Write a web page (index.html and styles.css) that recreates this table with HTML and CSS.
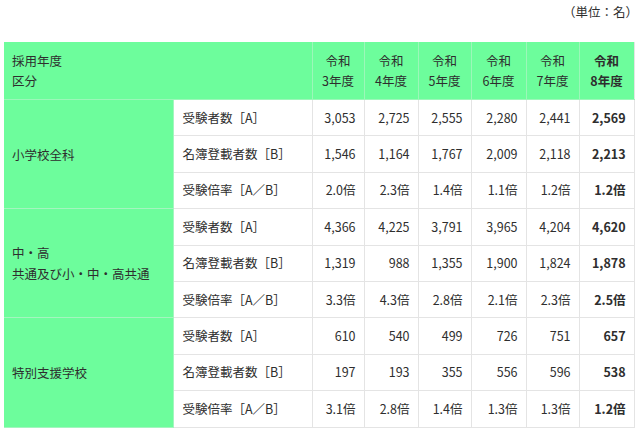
FILE: index.html
```html
<!DOCTYPE html>
<html lang="ja">
<head>
<meta charset="utf-8">
<link rel="stylesheet" href="styles.css">
</head>
<body>
<div class="page">
  <div class="unit">（単位：名）</div>
  <table class="tbl">
    <colgroup>
      <col class="c-cat"><col class="c-item">
      <col class="c-y1"><col class="c-y2"><col class="c-y3"><col class="c-y4"><col class="c-y5"><col class="c-y6">
    </colgroup>
    <thead>
      <tr class="head">
        <th colspan="2" class="hcat">採用年度<br>区分</th>
        <th>令和<br>3年度</th>
        <th>令和<br>4年度</th>
        <th>令和<br>5年度</th>
        <th>令和<br>6年度</th>
        <th>令和<br>7年度</th>
        <th class="bold">令和<br>8年度</th>
      </tr>
    </thead>
    <tbody>
      <tr>
        <th rowspan="3" class="cat">小学校全科</th>
        <td class="item">受験者数［A］</td>
        <td>3,053</td><td>2,725</td><td>2,555</td><td>2,280</td><td>2,441</td><td class="bold">2,569</td>
      </tr>
      <tr>
        <td class="item">名簿登載者数［B］</td>
        <td>1,546</td><td>1,164</td><td>1,767</td><td>2,009</td><td>2,118</td><td class="bold">2,213</td>
      </tr>
      <tr>
        <td class="item">受験倍率［A／B］</td>
        <td>2.0倍</td><td>2.3倍</td><td>1.4倍</td><td>1.1倍</td><td>1.2倍</td><td class="bold">1.2倍</td>
      </tr>
      <tr>
        <th rowspan="3" class="cat">中・高<br>共通及び小・中・高共通</th>
        <td class="item">受験者数［A］</td>
        <td>4,366</td><td>4,225</td><td>3,791</td><td>3,965</td><td>4,204</td><td class="bold">4,620</td>
      </tr>
      <tr>
        <td class="item">名簿登載者数［B］</td>
        <td>1,319</td><td>988</td><td>1,355</td><td>1,900</td><td>1,824</td><td class="bold">1,878</td>
      </tr>
      <tr>
        <td class="item">受験倍率［A／B］</td>
        <td>3.3倍</td><td>4.3倍</td><td>2.8倍</td><td>2.1倍</td><td>2.3倍</td><td class="bold">2.5倍</td>
      </tr>
      <tr>
        <th rowspan="3" class="cat">特別支援学校</th>
        <td class="item">受験者数［A］</td>
        <td>610</td><td>540</td><td>499</td><td>726</td><td>751</td><td class="bold">657</td>
      </tr>
      <tr>
        <td class="item">名簿登載者数［B］</td>
        <td>197</td><td>193</td><td>355</td><td>556</td><td>596</td><td class="bold">538</td>
      </tr>
      <tr>
        <td class="item">受験倍率［A／B］</td>
        <td>3.1倍</td><td>2.8倍</td><td>1.4倍</td><td>1.3倍</td><td>1.3倍</td><td class="bold">1.2倍</td>
      </tr>
    </tbody>
  </table>
</div>
</body>
</html>
```
FILE: styles.css
```css
html, body {
  margin: 0;
  padding: 0;
  background: #ffffff;
}
body {
  font-family: "Noto Sans CJK JP", "Noto Sans", sans-serif;
  color: #2e2e2e;
  font-size: 12.5px;
}
.page {
  width: 630px;
  padding: 0 6px 0 4px;
}
.unit {
  height: 42px;
  line-height: 24px;
  text-align: right;
  font-size: 12.5px;
  margin-right: -4px;
}
.tbl {
  width: 630px;
  table-layout: fixed;
  border-collapse: collapse;
}
.c-cat { width: 169px; }
.c-item { width: 139px; }
.c-y1 { width: 52px; }
.c-y2 { width: 54px; }
.c-y3 { width: 53px; }
.c-y4 { width: 55px; }
.c-y5 { width: 53px; }
.c-y6 { width: 55px; }
.tbl th, .tbl td {
  padding: 0 8px;
  border: 1px solid #e4e4e4;
  font-weight: normal;
  line-height: 20px;
  white-space: nowrap;
}
.head th {
  background: #6dfd9c;
  border-color: #9cf7b9;
  border-top: none;
  text-align: center;
  height: 57px;
  padding: 0;
}
.head th.hcat {
  text-align: left;
  padding-left: 8px;
  border-left: none;
}
.head th:last-child { border-right-color: #e4e4e4; }
.tbl tbody tr { height: 36.4px; }
.tbl td {
  text-align: right;
  vertical-align: middle;
}
.tbl td.item {
  text-align: left;
  padding-left: 9px;
}
.tbl th.cat {
  background: #6dfd9c;
  text-align: left;
  vertical-align: middle;
  border-left: none;
  border-color: #a4f5bf;
  line-height: 21px;
}
.bold { font-weight: bold !important; }
```
